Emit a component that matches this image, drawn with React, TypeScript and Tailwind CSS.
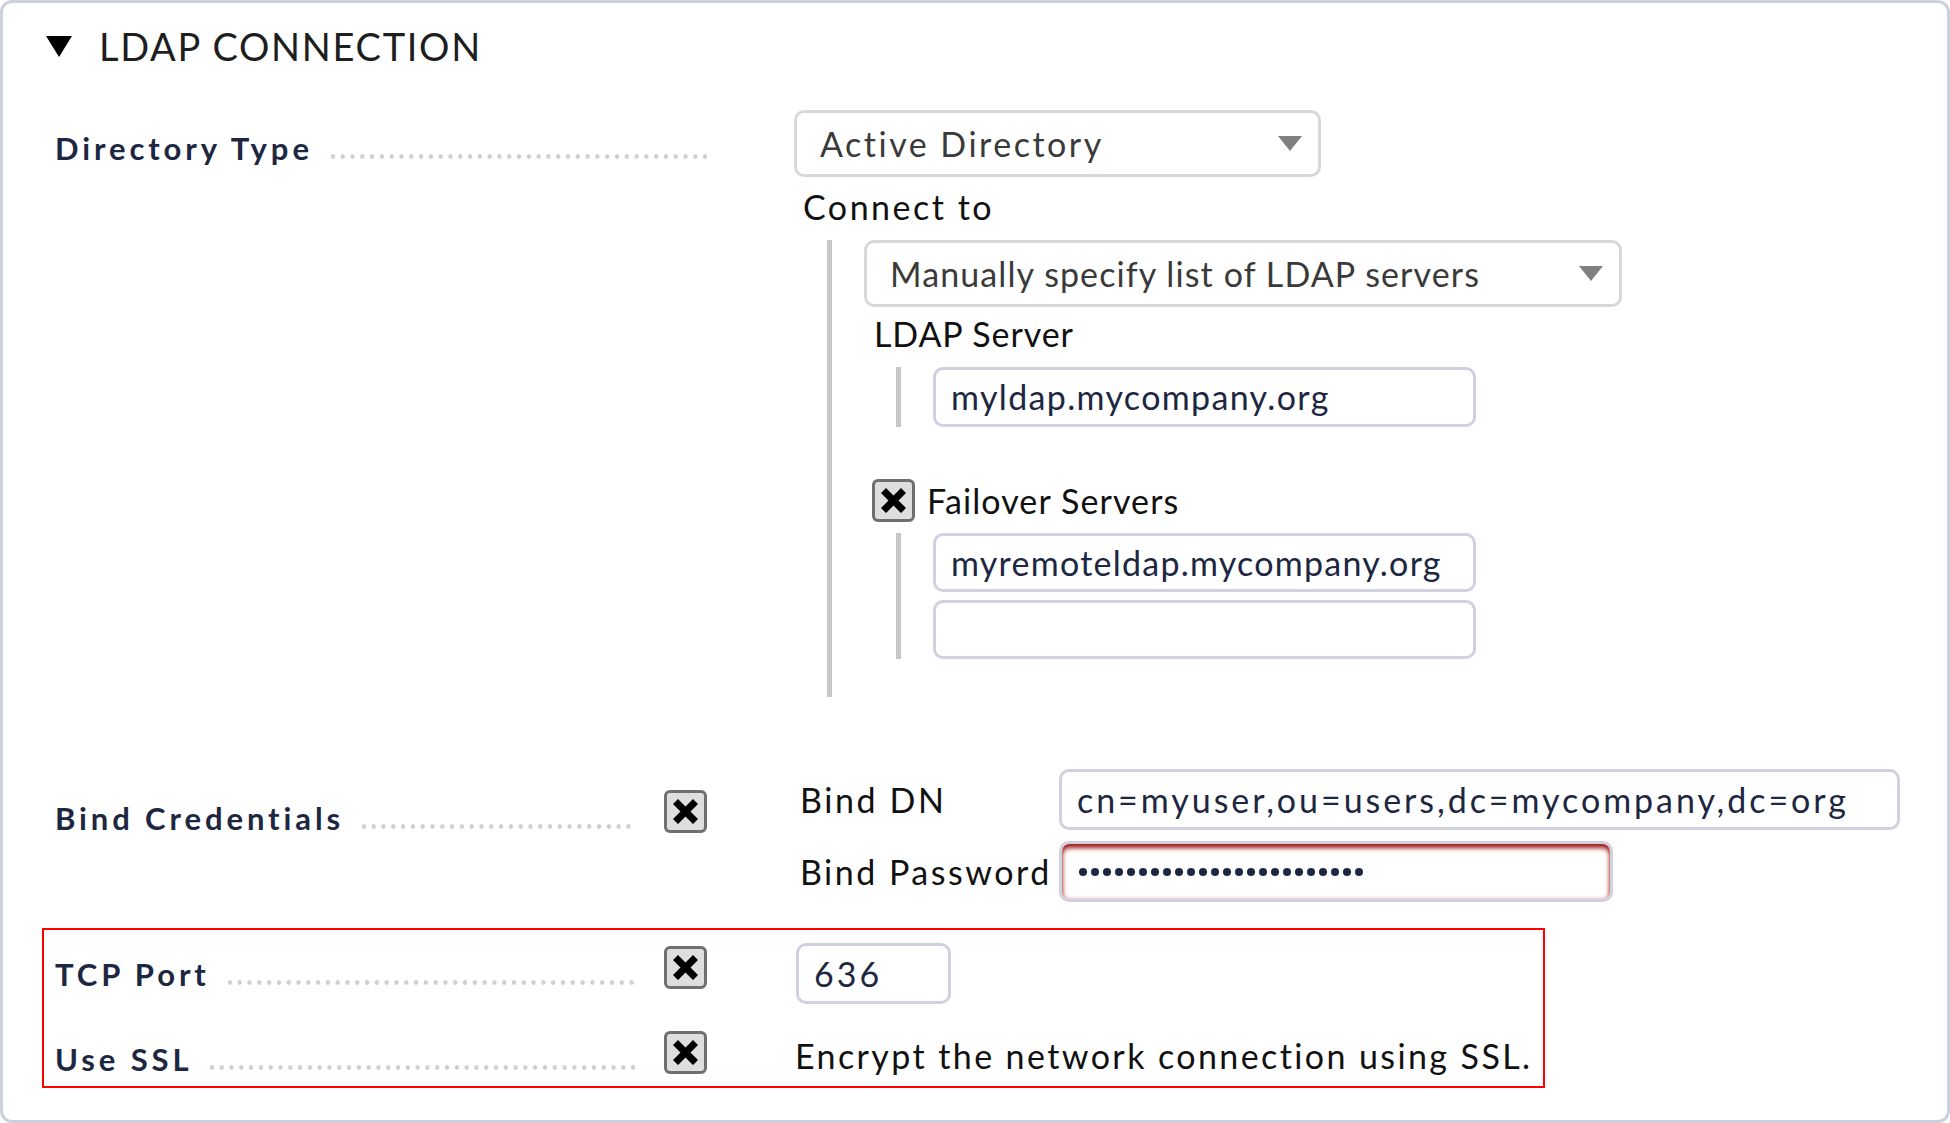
import React from "react";

const XMark = () => (
  <svg width="25" height="25" viewBox="0 0 25 25" aria-hidden="true">
    <polygon
      points="0,5 5,0 12.5,7.5 20,0 25,5 17.5,12.5 25,20 20,25 12.5,17.5 5,25 0,20 7.5,12.5"
      fill="#000"
    />
  </svg>
);

const Checkbox = () => (
  <div className="w-[43px] h-[43px] shrink-0 rounded-[6px] border-[3px] border-[#6f6f6f] bg-[#dedede] flex items-center justify-center">
    <XMark />
  </div>
);

const Dots = () => (
  <div className="flex-1 h-[5px] mb-[4px] bg-[radial-gradient(circle,#d0d0d0_2px,transparent_2.6px)] bg-[length:9.8px_5px] bg-repeat-x" />
);

const Label = ({ text, checkbox }: { text: string; checkbox?: boolean }) => (
  <div className="flex items-end w-[652px]">
    <span className="text-[31px] font-bold tracking-[3.9px] leading-[30px] text-[#1e2742] whitespace-nowrap">
      {text}
    </span>
    <div className="flex-1 flex items-end ml-[15px] h-[30px]">
      <Dots />
    </div>
    {checkbox && (
      <div className="ml-[29px]">
        <Checkbox />
      </div>
    )}
  </div>
);

const Select = ({ text, w, track }: { text: string; w: string; track: string }) => (
  <div
    className={`${w} h-[67px] rounded-[10px] border-[3px] border-[#d8d8d8] bg-white flex items-center justify-between pl-[23px] pr-[16px]`}
  >
    <span className={`text-[34px] leading-[40px] text-[#3a3a3a] whitespace-nowrap ${track}`}>{text}</span>
    <svg width="24" height="15" viewBox="0 0 24 15" aria-hidden="true">
      <polygon points="0,0 24,0 12,15" fill="#808080" />
    </svg>
  </div>
);

const TextInput = ({
  value,
  w,
  h = "h-[60px]",
  track = "",
}: {
  value: string;
  w: string;
  h?: string;
  track?: string;
}) => (
  <div
    className={`${w} ${h} rounded-[10px] border-[3px] border-[#cfd1df] bg-white flex items-center pl-[15px]`}
  >
    <span className={`text-[34px] leading-[40px] text-[#1e2742] whitespace-nowrap ${track}`}>{value}</span>
  </div>
);

const Bar = ({ children, className }: { children: React.ReactNode; className: string }) => (
  <div className={`border-l-[5px] border-[#c8c8c8] pl-[32px] ${className}`}>{children}</div>
);

export default function App() {
  const dots = Array.from({ length: 24 });
  return (
    <div className="w-[1950px] h-[1123px] bg-white font-['Lato','Liberation_Sans',sans-serif]">
      <div className="w-[1950px] h-[1123px] rounded-[12px] border-[3px] border-[#cdd0de] bg-white pl-[52px]">
        {/* Header */}
        <div className="flex items-center pt-[20px] -ml-[9px]">
          <svg width="26" height="21" viewBox="0 0 26 21" aria-hidden="true">
            <polygon points="0,0 26,0 13,21" fill="#000" />
          </svg>
          <span className="ml-[27px] text-[38px] leading-[46px] tracking-[1.7px] text-[#1e1e1e] whitespace-nowrap">
            LDAP CONNECTION
          </span>
        </div>

        {/* Directory Type */}
        <div className="flex mt-[41px]">
          <div className="w-[740px] shrink-0 mt-[23px]">
            <Label text="Directory Type" />
          </div>
          <div className="flex flex-col">
            <Select text="Active Directory" w="w-[527px] -ml-[1px]" track="tracking-[2.5px]" />
            <div className="mt-[10px] ml-[8px] text-[34px] leading-[40px] tracking-[2.5px] text-[#111]">Connect to</div>
            <Bar className="mt-[13px] ml-[32px] pb-[38px]">
              <Select text="Manually specify list of LDAP servers" w="w-[758px]" track="tracking-[1.1px]" />
              <div className="mt-[7px] ml-[10px] text-[34px] leading-[40px] tracking-[0.9px] text-[#111]">LDAP Server</div>
              <Bar className="mt-[13px] ml-[32px]">
                <TextInput value="myldap.mycompany.org" w="w-[543px]" track="tracking-[1.35px]" />
              </Bar>
              <div className="mt-[52px] ml-[8px] flex items-center gap-[12px]">
                <Checkbox />
                <span className="text-[34px] leading-[43px] tracking-[1.1px] text-[#111]">Failover Servers</span>
              </div>
              <Bar className="mt-[11px] ml-[32px] flex flex-col gap-[8px]">
                <TextInput value="myremoteldap.mycompany.org" w="w-[543px]" h="h-[59px]" track="tracking-[1.25px]" />
                <TextInput value="" w="w-[543px]" h="h-[59px]" />
              </Bar>
            </Bar>
          </div>
        </div>

        {/* Bind Credentials */}
        <div className="flex mt-[72px]">
          <div className="w-[740px] shrink-0 mt-[21px]">
            <Label text="Bind Credentials" checkbox />
          </div>
          <div className="grid grid-cols-[264px_auto] gap-y-[11px] items-center">
            <div className="ml-[5px] text-[34px] leading-[40px] tracking-[2.6px] text-[#111]">Bind DN</div>
            <TextInput
              value="cn=myuser,ou=users,dc=mycompany,dc=org"
              w="w-[841px]"
              h="h-[61px]"
              track="tracking-[2.95px]"
            />
            <div className="ml-[5px] text-[34px] leading-[40px] tracking-[2.5px] text-[#111] whitespace-nowrap">
              Bind Password
            </div>
            <div className="w-[554px] h-[61px] rounded-[10px] border-[3px] border-[#cfd1df] bg-white flex items-center pl-[17px] gap-[4px] shadow-[inset_0_4px_5px_rgba(150,0,0,0.9),inset_0_0_4px_rgba(200,40,40,0.4)]">
              {dots.map((_, i) => (
                <span key={i} className="w-[8px] h-[8px] rounded-full bg-[#1e2742] shrink-0" />
              ))}
            </div>
          </div>
        </div>

        {/* Highlighted: TCP Port & Use SSL */}
        <div className="mt-[26px] -ml-[13px] w-[1503px] border-2 border-[#ff0000] pl-[11px] pt-[13px] pb-[9px]">
          <div className="flex">
            <div className="w-[740px] shrink-0 mt-[3px]">
              <Label text="TCP Port" checkbox />
            </div>
            <TextInput value="636" w="w-[155px] ml-[1px]" h="h-[61px]" track="tracking-[3px]" />
          </div>
          <div className="flex mt-[27px]">
            <div className="w-[740px] shrink-0">
              <Label text="Use SSL" checkbox />
            </div>
            <div className="mt-[3px] ml-[0px] text-[34px] leading-[43px] tracking-[2.4px] text-[#111] whitespace-nowrap">
              Encrypt the network connection using SSL.
            </div>
          </div>
        </div>
      </div>
    </div>
  );
}
